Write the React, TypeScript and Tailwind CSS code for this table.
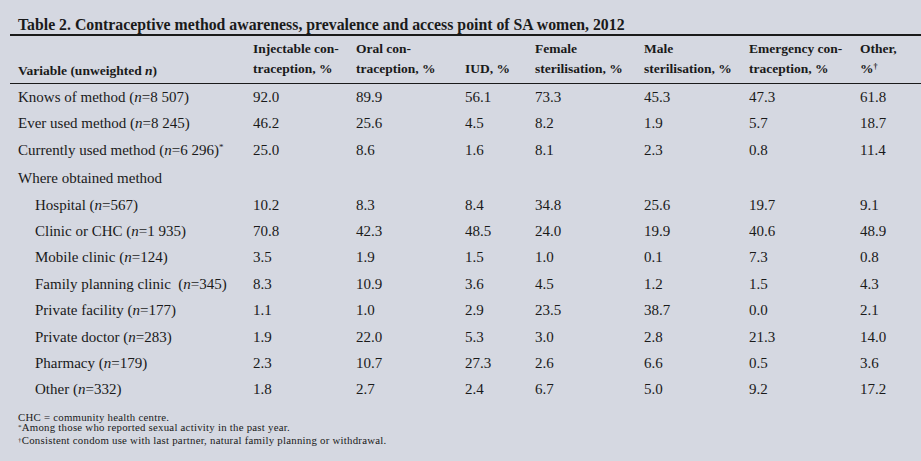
const cols = 'grid grid-cols-[235px_103px_109px_70px_109px_105px_111px_1fr]';

const headers: [string, string][] = [
  ['Injectable con-', 'traception, %'],
  ['Oral con-', 'traception, %'],
  ['', 'IUD, %'],
  ['Female', 'sterilisation, %'],
  ['Male', 'sterilisation, %'],
  ['Emergency con-', 'traception, %'],
];

type Row = { label: string; n?: string; mark?: string; indent?: boolean; values: string[] };

const rows: Row[] = [
  { label: 'Knows of method', n: '8 507', values: ['92.0', '89.9', '56.1', '73.3', '45.3', '47.3', '61.8'] },
  { label: 'Ever used method', n: '8 245', values: ['46.2', '25.6', '4.5', '8.2', '1.9', '5.7', '18.7'] },
  { label: 'Currently used method', n: '6 296', mark: '*', values: ['25.0', '8.6', '1.6', '8.1', '2.3', '0.8', '11.4'] },
  { label: 'Where obtained method', values: [] },
  { label: 'Hospital', n: '567', indent: true, values: ['10.2', '8.3', '8.4', '34.8', '25.6', '19.7', '9.1'] },
  { label: 'Clinic or CHC', n: '1 935', indent: true, values: ['70.8', '42.3', '48.5', '24.0', '19.9', '40.6', '48.9'] },
  { label: 'Mobile clinic', n: '124', indent: true, values: ['3.5', '1.9', '1.5', '1.0', '0.1', '7.3', '0.8'] },
  { label: 'Family planning clinic ', n: '345', indent: true, values: ['8.3', '10.9', '3.6', '4.5', '1.2', '1.5', '4.3'] },
  { label: 'Private facility', n: '177', indent: true, values: ['1.1', '1.0', '2.9', '23.5', '38.7', '0.0', '2.1'] },
  { label: 'Private doctor', n: '283', indent: true, values: ['1.9', '22.0', '5.3', '3.0', '2.8', '21.3', '14.0'] },
  { label: 'Pharmacy', n: '179', indent: true, values: ['2.3', '10.7', '27.3', '2.6', '6.6', '0.5', '3.6'] },
  { label: 'Other', n: '332', indent: true, values: ['1.8', '2.7', '2.4', '6.7', '5.0', '9.2', '17.2'] },
];

export default function App() {
  return (
    <div className="w-[921px] h-[461px] bg-[#d5d8e1] text-[#1a1a1a] pl-[10px] pt-[15px] font-['Liberation_Serif',serif] overflow-hidden">
      {/* Title */}
      <div className="pl-[8px] text-[15.8px] font-bold leading-[19px] border-b-2 border-[#1a1a1a]">
        Table 2. Contraceptive method awareness, prevalence and access point of SA women, 2012
      </div>

      {/* Header */}
      <div className={`${cols} pl-[8px] border-b border-[#1a1a1a] text-[13.5px] font-bold leading-[20px] pt-[3px] pb-[2px]`}>
        <div className="flex flex-col justify-end">
          <span>
            Variable (unweighted <i>n</i>)
          </span>
        </div>
        {headers.map(([a, b], i) => (
          <div key={i} className="flex flex-col">
            <span className="h-[20px]">{a}</span>
            <span>{b}</span>
          </div>
        ))}
        <div className="flex flex-col">
          <span className="h-[20px]">Other,</span>
          <span>
            %<span className="relative -top-[4px] text-[8px]">†</span>
          </span>
        </div>
      </div>

      {/* Body */}
      <div>
        {rows.map((r, i) => (
          <div key={i} className={`${cols} pl-[8px] text-[15px] leading-[26.4px]`}>
            <div className={`whitespace-pre ${r.indent ? 'pl-[17px]' : ''}`}>
              {r.label}
              {r.n && (
                <>
                  {' ('}
                  <i>n</i>={r.n})
                </>
              )}
              {r.mark && <span className="relative -top-[5px] text-[9px]">{r.mark}</span>}
            </div>
            {r.values.map((v, j) => (
              <div key={j}>{v}</div>
            ))}
          </div>
        ))}
      </div>

      {/* Footnotes */}
      <div className="pl-[8px] pt-[9px] text-[10.8px] tracking-[0.25px] leading-[10.5px]">
        <div>CHC = community health centre.</div>
        <div>
          <span className="relative -top-[2px] text-[7px]">*</span>Among those who reported sexual activity in the past year.
        </div>
        <div>
          <span className="relative -top-[2px] text-[7px]">†</span>Consistent condom use with last partner, natural family planning or withdrawal.
        </div>
      </div>
    </div>
  );
}
